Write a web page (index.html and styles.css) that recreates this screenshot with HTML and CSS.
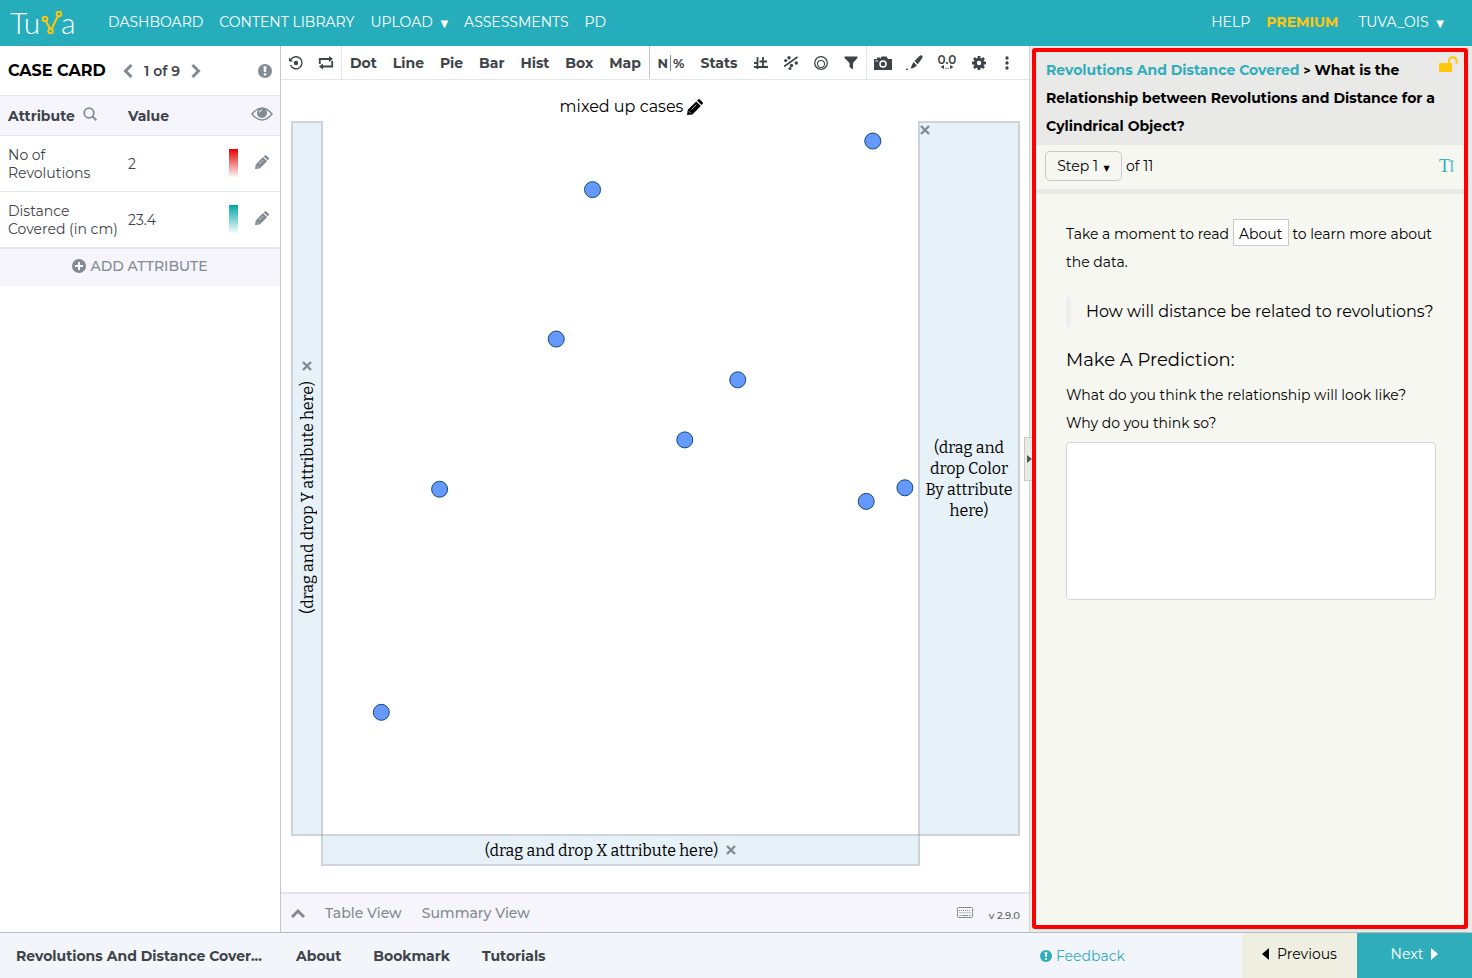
FILE: index.html
```
<!DOCTYPE html>
<html lang="en">
  <head>
    <meta charset="UTF-8" />
    <meta name="viewport" content="width=device-width, initial-scale=1.0" />
    <title>Tuva - Revolutions And Distance Covered</title>
    <link rel="stylesheet" href="styles.css">
  </head>
  <body>
    <!-- Shared icons -->
    <svg class="sprite" aria-hidden="true">
      <symbol id="pencil" viewBox="0 0 16 16">
        <path d="M0 16l.8-5.200 8.400-8.400 4.600 4.600-8.400 8.400z M10 1.600L11.200.5q.8-.8 1.700 0l2.700 2.700q.8.800 0 1.700L14.500 6z" fill="currentColor" />
        <path d="M1.800 12.200l2 2M4.500 10.500l4.800-4.800" stroke="#fff" stroke-width="0.700" />
      </symbol>
      <symbol id="cross" viewBox="0 0 10 10">
        <path d="M1 1l8 8M9 1L1 9" stroke="currentColor" stroke-width="2.400" />
      </symbol>
      <symbol id="alert" viewBox="0 0 14 14">
        <circle cx="7" cy="7" r="7" fill="currentColor" />
        <path d="M5.500 2.300h3L8.100 8H5.900z M5.800 9.200h2.400v2.300H5.800z" fill="#fff" />
      </symbol>
    </svg>

    <header class="navbar">
      <a class="logo" href="#" aria-label="Tuva">
        <svg width="70" height="40" viewBox="0 0 70 40">
          <text x="0" y="32">Tu</text>
          <text x="51" y="32">a</text>
          <g fill="none" stroke="#ffc60b" stroke-width="2">
            <path d="M36 19l4 8M41.500 27l6.500-13" />
            <circle cx="35" cy="17" r="2.300" />
            <circle cx="49" cy="12" r="2.300" />
            <circle cx="40.500" cy="29" r="2.200" />
          </g>
        </svg>
      </a>
      <nav class="nav-links">
        <a href="#">DASHBOARD</a>
        <a href="#">CONTENT LIBRARY</a>
        <a href="#">UPLOAD <span class="caret">▼</span></a>
        <a href="#">ASSESSMENTS</a>
        <a href="#">PD</a>
      </nav>
      <nav class="nav-links nav-right">
        <a href="#">HELP</a>
        <a href="#" class="premium">PREMIUM</a>
        <a href="#" class="account">TUVA_OIS <span class="caret">▼</span></a>
      </nav>
    </header>

    <main class="workspace">
      <aside class="case-card">
        <div class="case-header">
          <h2>CASE CARD</h2>
          <button type="button" aria-label="Previous case">
            <svg width="10" height="14" viewBox="0 0 10 14"><path d="M8.500 1L2.500 7l6 6" fill="none" stroke="currentColor" stroke-width="3" /></svg>
          </button>
          <span class="case-count">1 of 9</span>
          <button type="button" aria-label="Next case">
            <svg width="10" height="14" viewBox="0 0 10 14"><path d="M1.500 1l6 6-6 6" fill="none" stroke="currentColor" stroke-width="3" /></svg>
          </button>
          <button type="button" class="case-info" aria-label="Case information">
            <svg width="14" height="14"><use href="#alert" /></svg>
          </button>
        </div>
        <table class="attributes">
          <thead>
            <tr>
              <th class="col-name">Attribute
                <button type="button" aria-label="Search attributes">
                  <svg width="14" height="14" viewBox="0 0 14 14" fill="none" stroke="currentColor"><circle cx="6" cy="6" r="4.800" stroke-width="1.800" /><path d="M9.500 9.500L13.300 13.300" stroke-width="2" /></svg>
                </button>
              </th>
              <th class="col-value">Value</th>
              <th class="col-scale"></th>
              <th class="col-edit">
                <button type="button" aria-label="Show or hide attributes">
                  <svg width="22" height="14" viewBox="0 0 22 14"><path d="M1 7Q6 1 11 1t10 6q-5 6-10 6T1 7z" fill="none" stroke="currentColor" stroke-width="1.400" /><circle cx="11" cy="6" r="5" fill="currentColor" /><path d="M8.300 5.500Q8.500 3.300 11 3" fill="none" stroke="#fff" /></svg>
                </button>
              </th>
            </tr>
          </thead>
          <tbody>
            <tr>
              <td>No of Revolutions</td>
              <td>2</td>
              <td><span class="scale scale-red"></span></td>
              <td class="col-edit"><button type="button" aria-label="Edit No of Revolutions"><svg width="14" height="14"><use href="#pencil" /></svg></button></td>
            </tr>
            <tr>
              <td>Distance Covered (in cm)</td>
              <td>23.4</td>
              <td><span class="scale scale-teal"></span></td>
              <td class="col-edit"><button type="button" aria-label="Edit Distance Covered"><svg width="14" height="14"><use href="#pencil" /></svg></button></td>
            </tr>
          </tbody>
        </table>
        <button type="button" class="add-attribute">
          <svg width="14" height="14" viewBox="0 0 14 14"><circle cx="7" cy="7" r="7" fill="currentColor" /><path d="M7 3v8M3 7h8" stroke="#fff" stroke-width="2" /></svg>
          ADD ATTRIBUTE
        </button>
      </aside>

      <section class="graph">
        <div class="toolbar">
          <div class="tools tools-history">
            <button type="button" aria-label="Reset">
              <svg width="16" height="16" viewBox="0 0 16 16" fill="none" stroke="currentColor"><path d="M3 4.500A6 6 0 1 1 2.500 10" stroke-width="1.400" /><path d="M1 2.500v4h4z" fill="currentColor" stroke="none" /><circle cx="8" cy="8" r="2.200" fill="currentColor" stroke="none" /></svg>
            </button>
            <button type="button" aria-label="Swap">
              <svg width="16" height="14" viewBox="0 0 16 14" fill="none" stroke="currentColor" stroke-width="1.800"><path d="M1.800 8V3H12M14.200 5v5.500H4" /><path d="M11 0l4 3-4 3zM5 7.500l-4 3 4 3z" fill="currentColor" stroke="none" /></svg>
            </button>
          </div>
          <div class="tools tools-charts">
            <button type="button">Dot</button>
            <button type="button">Line</button>
            <button type="button">Pie</button>
            <button type="button">Bar</button>
            <button type="button">Hist</button>
            <button type="button">Box</button>
            <button type="button">Map</button>
          </div>
          <div class="tools tools-stats">
            <button type="button" class="count">N<i></i>%</button>
            <button type="button" class="stats">Stats</button>
            <button type="button" class="icon" aria-label="Reference lines">
              <svg width="14" height="14" viewBox="0 0 14 14" fill="none" stroke="currentColor" stroke-width="1.800"><path d="M3.500 1v12M9 1v9.500M0 11h14M0 7h3.500M5.500 5.500H13" /></svg>
            </button>
            <button type="button" class="icon" aria-label="Fit line">
              <svg width="14" height="14" viewBox="0 0 14 14" fill="currentColor"><path d="M0 10.500L13.500 1" stroke="currentColor" stroke-width="1.600" /><circle cx="5" cy="1.800" r="1.700" /><circle cx="1.700" cy="4.500" r="1.600" /><circle cx="7.500" cy="9.500" r="1.700" /><circle cx="12.300" cy="7" r="1.700" /><circle cx="6" cy="12.500" r="1.500" /></svg>
            </button>
            <button type="button" class="icon" aria-label="Size by">
              <svg width="14" height="14" viewBox="0 0 14 14" fill="none" stroke="currentColor"><circle cx="7" cy="7" r="6.300" stroke-width="1.300" /><circle cx="7" cy="8" r="3.500" stroke-width="1.100" /></svg>
            </button>
            <button type="button" class="icon" aria-label="Filter">
              <svg width="14" height="14" viewBox="0 0 14 14"><path d="M0.500 0.500h13v1.500L9 7v6.500L5.500 11V7L0.500 2z" fill="currentColor" /></svg>
            </button>
          </div>
          <div class="tools tools-extra">
            <button type="button" class="icon" aria-label="Snapshot">
              <svg width="18" height="14" viewBox="0 0 18 14"><path d="M0 3h3V1.500h3V3l1.500-2.500h5L14 3h4v11H0z" fill="currentColor" /><circle cx="9" cy="8" r="3" fill="none" stroke="#fff" stroke-width="1.500" /><path d="M1.500 5h2.500" stroke="#fff" /></svg>
            </button>
            <button type="button" class="icon" aria-label="Annotate">
              <svg width="18" height="16" viewBox="0 0 18 16" fill="currentColor"><path d="M7.500 7l3.500 3.500-3.500 2.500-2.800.8.800-2.800z M8.500 6L13 1.500q2-2 3.200-.8t-.7 3.300L11.800 9.300z M0 13.700h2V15H0z" /></svg>
            </button>
            <button type="button" class="icon decimals" aria-label="Decimal places">
              <span>0.0</span>
              <svg width="14" height="5" viewBox="0 0 14 5" fill="currentColor"><path d="M4 0v4L0.500 2zM10 0v4l3.500-2z M5.500 2.700h1V4h-1z M7.500 2.700h1V4h-1z" /></svg>
            </button>
            <button type="button" class="icon" aria-label="Settings">
              <svg width="14" height="14" viewBox="0 0 14 14"><g stroke="currentColor" fill="none"><circle cx="7" cy="7" r="3.700" stroke-width="3" /><path d="M7 0v2.500M7 11.500V14M0 7h2.500M11.500 7H14M2 2l2 2M10 10l2 2M2 12l2-2M10 4l2-2" stroke-width="2.800" /></g></svg>
            </button>
            <button type="button" class="more" aria-label="More">
              <svg width="4" height="14" viewBox="0 0 4 14" fill="currentColor"><circle cx="2" cy="2" r="1.700" /><circle cx="2" cy="7" r="1.700" /><circle cx="2" cy="12" r="1.700" /></svg>
            </button>
          </div>
        </div>

        <h1 class="graph-title">mixed up cases
          <button type="button" aria-label="Edit title"><svg width="16" height="16"><use href="#pencil" /></svg></button>
        </h1>

        <div class="plot">
          <div class="drop-zone zone-y">
            <button type="button" aria-label="Close"><svg width="10" height="10"><use href="#cross" /></svg></button>
            <span>(drag and drop Y attribute here)</span>
          </div>
          <svg class="dots">
            <circle cx="92.400%" cy="2.800%" r="8" />
            <circle cx="45.300%" cy="9.600%" r="8" />
            <circle cx="39.200%" cy="30.500%" r="8" />
            <circle cx="69.700%" cy="36.200%" r="8" />
            <circle cx="60.800%" cy="44.600%" r="8" />
            <circle cx="19.600%" cy="51.500%" r="8" />
            <circle cx="91.300%" cy="53.200%" r="8" />
            <circle cx="97.800%" cy="51.300%" r="8" />
            <circle cx="9.800%" cy="82.700%" r="8" />
          </svg>
          <div class="drop-zone zone-color">
            <button type="button" aria-label="Close"><svg width="10" height="10"><use href="#cross" /></svg></button>
            <span>(drag and drop Color By attribute here)</span>
          </div>
          <div class="drop-zone zone-x">
            <span>(drag and drop X attribute here)</span>
            <button type="button" aria-label="Close"><svg width="10" height="10"><use href="#cross" /></svg></button>
          </div>
        </div>

        <div class="view-bar">
          <button type="button" aria-label="Expand">
            <svg width="14" height="9" viewBox="0 0 14 9"><path d="M1 8l6-6 6 6" fill="none" stroke="currentColor" stroke-width="3" /></svg>
          </button>
          <button type="button">Table View</button>
          <button type="button">Summary View</button>
          <button type="button" class="keyboard" aria-label="Keyboard shortcuts">
            <svg width="16" height="12" viewBox="0 0 16 12" fill="none" stroke="currentColor"><rect x="0.500" y="0.500" width="15" height="10" rx="1" /><path d="M2 3.500h12M2.500 5.700h11" stroke-dasharray="1 1" /><path d="M2.500 8.500h1.500M5 8.500h6M12 8.500h1.500" /></svg>
          </button>
          <span class="version">v 2.9.0</span>
        </div>
      </section>

      <aside class="activity">
        <button type="button" class="collapse" aria-label="Collapse activity"></button>
        <div class="activity-box">
          <div class="activity-title">
            <h2><a href="#">Revolutions And Distance Covered</a> <small>&gt;</small> What is the Relationship between Revolutions and Distance for a Cylindrical Object?</h2>
            <svg class="unlock" width="19" height="16" viewBox="0 0 19 16"><rect x="0" y="7" width="13" height="9" rx="1" fill="#ffc60b" /><path d="M10 8V5a3.800 3.800 0 0 1 7.600 0v2.800" fill="none" stroke="#ffc60b" stroke-width="2" /></svg>
          </div>
          <div class="step-bar">
            <button type="button" class="step-select">Step 1 <span class="caret">▼</span></button>
            <span>of 11</span>
            <button type="button" class="text-size" aria-label="Text size">T<svg width="4" height="12" viewBox="0 0 4 12"><path d="M2 1v10M.5 1h3M.5 11h3" fill="none" stroke="currentColor" stroke-width="1.200" /></svg></button>
          </div>
          <div class="activity-body">
            <p class="intro">Take a moment to read <button type="button" class="about">About</button> to learn more about the data.</p>
            <blockquote>How will distance be related to revolutions?</blockquote>
            <h3>Make A Prediction:</h3>
            <label for="answer">What do you think the relationship will look like?<br />Why do you think so?</label>
            <textarea id="answer"></textarea>
          </div>
        </div>
      </aside>
    </main>

    <footer class="bottom-bar">
      <a href="#" class="dataset">Revolutions And Distance Cover...</a>
      <a href="#">About</a>
      <a href="#">Bookmark</a>
      <a href="#">Tutorials</a>
      <div class="bottom-right">
        <a href="#" class="feedback"><svg width="12" height="12" viewBox="0 0 14 14"><use href="#alert" width="14" height="14" /></svg> Feedback</a>
        <button type="button" class="previous"><svg width="7" height="12" viewBox="0 0 7 12"><path d="M7 0v12L0 6z" fill="currentColor" /></svg>Previous</button>
        <button type="button" class="next">Next<svg width="7" height="12" viewBox="0 0 7 12"><path d="M0 0v12l7-6z" fill="currentColor" /></svg></button>
      </div>
    </footer>
  </body>
</html>
```
FILE: styles.css
```
* {
  box-sizing: border-box;
}
body {
  margin: 0;
  height: 100vh;
  display: flex;
  flex-direction: column;
  font-family: Montserrat, Inter, sans-serif;
  font-size: 14px;
  color: #3d4348;
  background-color: #fff;
}
a {
  color: inherit;
  text-decoration: none;
}
button {
  padding: 0;
  border: none;
  background: none;
  font: inherit;
  color: inherit;
  cursor: pointer;
}
svg {
  display: block;
}
h1,
h2,
h3,
p,
blockquote {
  margin: 0;
}
.sprite {
  position: absolute;
  width: 0;
  height: 0;
}
.caret {
  margin-left: 4px;
  font-family: "DejaVu Sans", sans-serif;
  font-size: 10px;
  line-height: 1;
}

/* Top navigation */
.navbar {
  flex: none;
  display: flex;
  align-items: center;
  height: 46px;
  padding: 0 28px 2px 10px;
  background-color: #26adbc;
  color: #fff;
}
.logo {
  width: 98px;
}
.logo text {
  font-family: Lato, sans-serif;
  font-size: 30px;
  font-weight: 300;
  fill: #fff;
}
.nav-links {
  display: flex;
  gap: 16px;
}
.nav-right {
  margin-left: auto;
}
.premium {
  color: #ffc60b;
  font-weight: 700;
}
.account {
  margin-left: 4px;
}

.workspace {
  flex: 1;
  display: flex;
  min-height: 0;
}

/* Case card */
.case-card {
  flex: none;
  width: 281px;
  border-right: 1px solid #c3c6d1;
}
.case-header {
  display: flex;
  align-items: center;
  height: 49px;
  padding: 0 8px;
}
.case-header h2 {
  width: 115px;
  font-size: 16px;
  font-weight: 700;
  color: #000;
}
.case-header button,
.attributes button {
  color: #838a93;
}
.case-count {
  width: 58px;
  text-align: center;
  font-weight: 600;
}
.case-header .case-info {
  margin-left: auto;
}
.attributes {
  width: 100%;
  border-collapse: collapse;
  table-layout: fixed;
}
.attributes th {
  height: 40px;
  padding: 0 0 0 8px;
  text-align: left;
  font-weight: 700;
  background-color: #f5f5fb;
}
.attributes th,
.attributes td {
  border-top: 1px solid #e2e4e9;
}
.attributes td {
  height: 56px;
  padding: 0 0 0 8px;
  line-height: 18px;
}
.attributes .col-name {
  width: 120px;
}
.col-name button {
  margin-left: 4px;
}
.attributes .col-scale {
  width: 22px;
}
.attributes .col-edit {
  width: 37px;
  padding: 0;
  text-align: center;
}
.col-edit svg {
  margin: auto;
}
.scale {
  display: block;
  width: 9px;
  height: 29px;
}
.scale-red {
  background: linear-gradient(#e60000, #fff);
}
.scale-teal {
  background: linear-gradient(#00a5a5, #fff);
}
.add-attribute {
  display: flex;
  align-items: center;
  justify-content: center;
  gap: 4px;
  width: 100%;
  height: 39px;
  margin-top: -1px;
  padding-bottom: 3px;
  border-top: 2px solid #e2e4e9;
  background-color: #f5f5fb;
  font-weight: 500;
  color: #838a93;
}

/* Graph */
.graph {
  flex: 1;
  min-width: 0;
  display: flex;
  flex-direction: column;
}
.toolbar {
  display: flex;
  height: 34px;
  border-bottom: 1px solid #e2e4e9;
  font-weight: 700;
}
.tools {
  flex: none;
  display: flex;
  align-items: center;
  border-right: 1px solid #e2e4e9;
}
.tools svg {
  margin: auto;
}
.tools-history {
  width: 61px;
  justify-content: space-around;
}
.tools-charts {
  width: 308px;
  padding: 0 8px;
  justify-content: space-between;
  border-color: #c3c6d1;
}
.tools-stats .icon {
  width: 30px;
}
.tools-extra {
  border-right: none;
}
.tools-extra .icon {
  width: 32px;
}
.count {
  display: flex;
  justify-content: center;
  gap: 2px;
  width: 42px;
  font-size: 13px;
}
.count i {
  width: 1px;
  background-color: #838a93;
}
.stats {
  width: 54px;
}
.more {
  width: 24px;
}
.decimals span {
  display: block;
  font-size: 12px;
  line-height: 10px;
  font-weight: 600;
}
.graph-title {
  display: flex;
  align-items: center;
  justify-content: center;
  gap: 4px;
  height: 41px;
  padding: 12px 47px 0 0;
  font-size: 16px;
  font-weight: 400;
  color: #000;
}
.plot {
  flex: 1;
  display: grid;
  grid-template-columns: 32px 1fr 102px;
  grid-template-rows: 1fr 30px;
  margin: 0 9px 26px 10px;
  font-family: Bitter, "Liberation Serif", serif;
  font-size: 16px;
  color: #000;
}
.drop-zone {
  display: flex;
  align-items: center;
  justify-content: center;
  border: 2px solid rgba(155, 165, 187, 0.5);
  background-color: #e6f1f8;
  background-clip: padding-box;
}
.drop-zone button {
  color: #838a93;
}
.zone-y {
  flex-direction: column;
  gap: 10px;
  padding-top: 18px;
}
.zone-y span {
  writing-mode: vertical-rl;
  transform: rotate(180deg);
}
.zone-color {
  position: relative;
  padding: 4px;
  text-align: center;
  line-height: 21px;
}
.zone-color button {
  position: absolute;
  top: 2px;
  left: 0;
}
.zone-x {
  grid-column: 2;
  gap: 8px;
  margin: -2px -2px 0;
  padding-right: 20px;
}
.dots {
  width: 100%;
  height: 100%;
  overflow: visible;
  fill: #6699ff;
  stroke: #124a6b;
}
.view-bar {
  display: flex;
  align-items: center;
  gap: 20px;
  height: 40px;
  padding: 0 9px 0 10px;
  border-top: 2px solid #e2e4e9;
  background-color: #f5f5fb;
  font-weight: 500;
  color: #838a93;
}
.view-bar .keyboard {
  margin-left: auto;
}
.version {
  margin-left: -4px;
  padding-top: 4px;
  font-size: 10px;
  color: #5b6066;
}

/* Activity panel */
.activity {
  position: relative;
  flex: none;
  display: flex;
  width: 443px;
  padding: 2px 4px 3px 2px;
  border-left: 1px solid #d5d5d5;
  background-color: #e9e9e8;
}
.collapse {
  position: absolute;
  left: -6px;
  top: 391px;
  width: 10px;
  height: 44px;
  border: 1px solid #c9c9c9;
  background-color: #e9e9e8;
}
.collapse::after {
  content: "";
  display: block;
  margin-left: 2px;
  border: 4px solid transparent;
  border-left: 5px solid #555;
  border-right: none;
}
.activity-box {
  position: relative;
  flex: 1;
  border: 4px solid #ff0000;
  border-radius: 3px;
  background-color: #f6f7f0;
  color: #000;
}
.activity-title {
  display: flex;
  padding: 4px 6px 5px 10px;
  background-color: #e9e9e8;
}
.activity-title h2 {
  flex: 1;
  font-size: 14px;
  line-height: 28px;
  font-weight: 700;
}
.activity-title h2 a {
  color: #30adbb;
}
.activity-title small {
  font-size: 12px;
  line-height: 1;
}
.unlock {
  flex: none;
}
.step-bar {
  display: flex;
  align-items: center;
  gap: 4px;
  height: 49px;
  padding: 0 10px 2px 9px;
  border-bottom: 5px solid #e9e9e8;
}
.step-select {
  width: 77px;
  height: 30px;
  border: 1px solid #c9c9c9;
  border-radius: 5px;
}
.step-select .caret {
  margin-left: 2px;
  font-size: 8px;
}
.text-size {
  display: flex;
  align-items: center;
  margin-left: auto;
  font-family: "Liberation Serif", serif;
  font-size: 18px;
  color: #30adbb;
}
.activity-body {
  padding: 25px 28px 0 30px;
}
.intro {
  line-height: 28px;
}
.about {
  width: 56px;
  height: 27px;
  border: 1px solid #c9c9c9;
  background-color: #fff;
}
blockquote {
  margin: 21px 0 20px;
  padding-left: 15px;
  border-left: 5px solid #eee;
  font-size: 16px;
  line-height: 30px;
  white-space: nowrap;
}
.activity-body h3 {
  margin-bottom: 8px;
  font-size: 18px;
  line-height: 26px;
  font-weight: 400;
}
.activity-body label {
  display: block;
  line-height: 28px;
}
.activity-body textarea {
  display: block;
  width: 100%;
  height: 158px;
  margin-top: 5px;
  border: 1px solid #d5d5d5;
  border-radius: 4px;
  background-color: #fff;
  resize: none;
}

/* Bottom bar */
.bottom-bar {
  flex: none;
  display: flex;
  align-items: center;
  gap: 32px;
  height: 46px;
  padding-left: 16px;
  border-top: 1px solid #b9bcc0;
  background-color: #f2f5fa;
  font-weight: 700;
}
.dataset {
  width: 248px;
}
.bottom-right {
  display: flex;
  align-items: center;
  align-self: stretch;
  width: 432px;
  margin-left: auto;
  font-weight: 400;
}
.feedback {
  display: flex;
  align-items: center;
  gap: 4px;
  margin-right: auto;
  color: #30adbb;
}
.previous,
.next {
  display: flex;
  align-items: center;
  justify-content: center;
  gap: 8px;
  width: 115px;
  height: 100%;
  padding-bottom: 3px;
}
.previous {
  background-color: #efefe1;
  color: #000;
}
.next {
  background-color: #30adbb;
  color: #fff;
}
```
